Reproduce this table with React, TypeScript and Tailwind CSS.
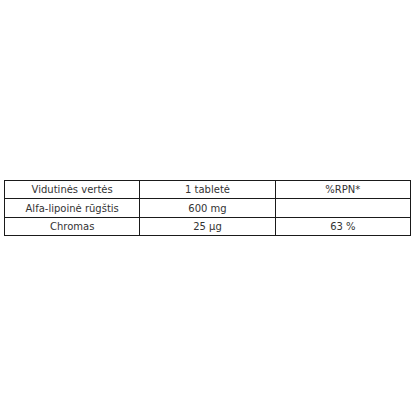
import React from 'react';

const rows = [
  ['Vidutinės vertės', '1 tabletė', '%RPN*'],
  ['Alfa-lipoinė rūgštis', '600 mg', ''],
  ['Chromas', '25 µg', '63 %'],
];

export default function App() {
  return (
    <div className="h-[416px] w-[416px] flex items-center bg-white pl-[4px] font-['DejaVu_Sans',sans-serif] text-[10px] text-[#333]">
      <table className="w-[407px] border-collapse table-fixed">
        <tbody>
          {rows.map((r, i) => (
            <tr key={i} className="h-[18.5px]">
              {r.map((c, j) => (
                <td key={j} className="border border-[#1a1a1a] text-center leading-[15px] py-[1px] px-1">
                  {c}
                </td>
              ))}
            </tr>
          ))}
        </tbody>
      </table>
    </div>
  );
}
